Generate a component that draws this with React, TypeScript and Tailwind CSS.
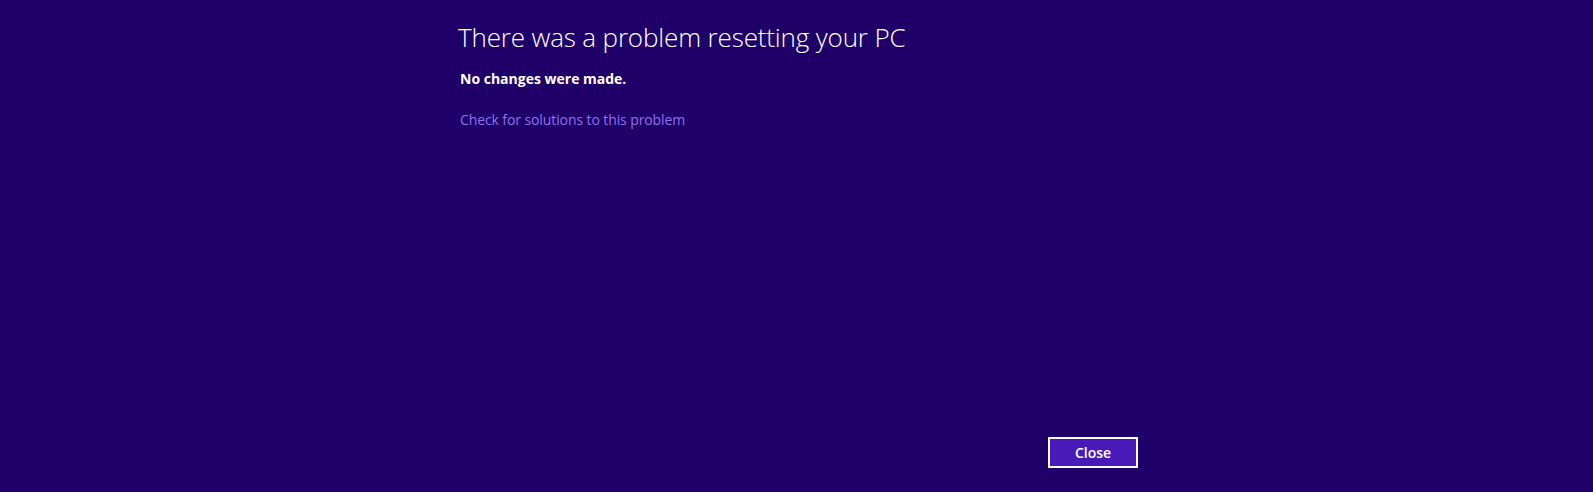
const App = () => {
  return (
    <div
      className="w-full h-[492px] bg-[#1f0068] text-white pl-[458px] pt-[20px] pb-[24px] flex"
      style={{ fontFamily: '"Open Sans", "Noto Sans", sans-serif' }}
    >
      <div className="w-[680px] flex flex-col">
        {/* Heading */}
        <h1 className="text-[26px] font-light leading-[34px] tracking-[-0.15px]">
          There was a problem resetting your PC
        </h1>
        <p className="mt-[15px] ml-[2px] text-[14px] font-bold leading-[20px]">
          No changes were made.
        </p>
        <a href="#" className="mt-[21px] ml-[2px] self-start text-[14px] leading-[20px] tracking-[-0.1px] text-[#8e71f0]">
          Check for solutions to this problem
        </a>

        {/* Footer button */}
        <div className="mt-auto flex justify-end">
          <button className="w-[90px] h-[31px] border-2 border-white bg-[#4a1ab8] text-[14px] font-semibold">
            Close
          </button>
        </div>
      </div>
    </div>
  );
};

export default App;
